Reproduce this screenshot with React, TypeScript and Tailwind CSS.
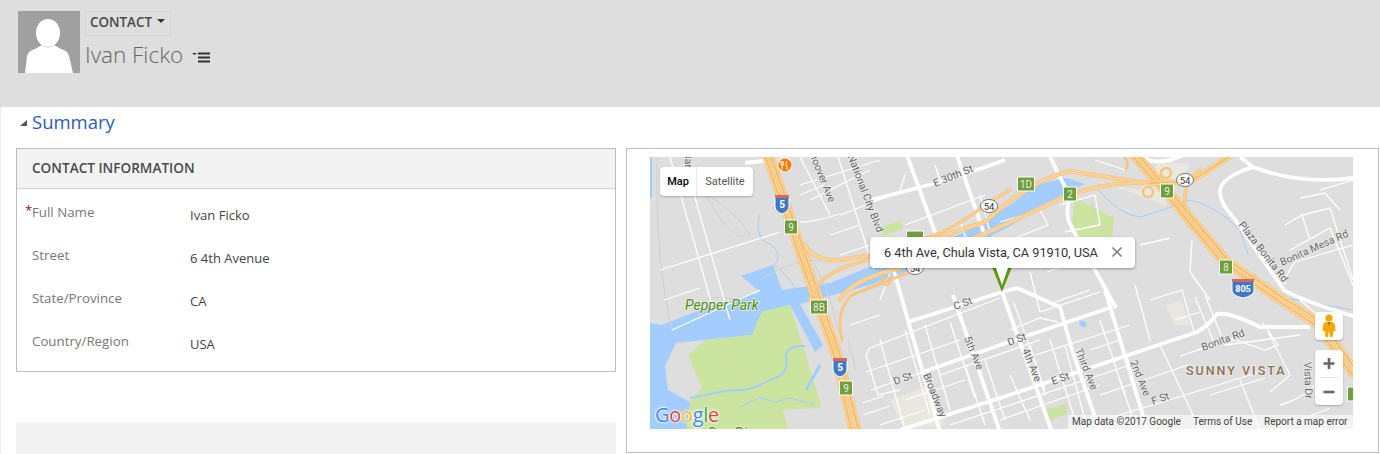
const mapFont = { fontFamily: "Roboto, sans-serif" };

const fields = [
  { label: "Full Name", value: "Ivan Ficko", required: true },
  { label: "Street", value: "6 4th Avenue" },
  { label: "State/Province", value: "CA" },
  { label: "Country/Region", value: "USA" },
];

// all map geometry is in page pixels, the svg viewBox starts at the map's corner
const bigRoads = [
  "M870 200 Q900 193 957 177 L1005 160",
  "M905 150 L936 235",
  "M955 150 L985 236",
  "M893 268 L940 432",
  "M953 295 L1000 432",
  "M1002 292 L1052 432",
  "M908 322 L1002 292 L1017 288 L1060 307 L1072 350 L1100 432",
  "M1105 290 L1148 432",
  "M920 373 L1000 345 L1112 307",
  "M900 430 L1000 398 L1197 332 Q1208 326 1217 314 Q1230 312 1260 327 L1310 327",
  "M1050 157 L1070 197 Q1064 215 1072 228 L1116 308",
  "M1240 157 L1253 167 Q1300 185 1353 178",
  "M1253 167 Q1218 178 1220 194 Q1222 206 1234 218 L1284 290 Q1300 300 1353 316",
  "M1135 150 Q1150 172 1190 152",
  "M745 163 L772 160",
];

const smallRoads = [
  "M670 157 L712 305", "M690 180 L730 320", "M660 270 L780 232", "M664 300 L700 288", "M672 330 L760 290",
  "M800 157 L830 215", "M838 157 L874 270", "M800 185 L880 160", "M800 195 L824 185", "M810 200 L870 170",
  "M840 215 L905 190", "M800 222 Q815 222 840 214", "M830 235 L860 225", "M840 255 L885 240",
  "M905 225 L985 195", "M960 220 L975 265", "M1000 222 L1040 210 L1048 225 L1010 240", "M880 300 L895 260",
  "M905 175 L900 190", "M935 165 L940 180", "M980 195 L990 232",
  "M1047 272 L1082 260", "M1030 272 L1040 312 L1100 292", "M1055 302 L1090 290",
  "M950 322 L975 398", "M1014 303 L1045 390", "M1100 320 L1125 395",
  "M866 355 L870 348 L1000 298", "M866 355 L878 395 L900 390", "M880 340 L905 430", "M850 325 L880 315",
  "M866 372 L960 340", "M871 390 L1000 345", "M862 403 L884 396", "M863 415 L890 406", "M880 425 L925 410", "M940 375 L1040 340",
  "M1010 330 L1040 318 L1058 322", "M1030 345 L1045 395", "M1050 340 L1075 420", "M1035 355 L1130 325",
  "M1090 350 L1120 340 L1130 365", "M1100 395 L1188 365", "M1110 418 L1260 372",
  "M1160 345 L1200 430", "M1150 300 L1182 290 L1195 335", "M1195 297 L1215 345", "M1175 320 L1200 312",
  "M1180 356 L1240 336", "M1197 350 L1235 340 Q1250 345 1265 350 L1278 345 L1262 322",
  "M1240 380 L1260 430", "M1210 395 L1265 378", "M1225 345 L1300 335", "M1268 332 L1290 375 L1270 392",
  "M1284 285 Q1288 270 1295 262 L1353 245", "M1290 250 L1330 228 L1353 285", "M1303 215 L1330 208 L1353 280",
  "M1285 225 L1302 215 L1310 240", "M1320 190 L1353 180", "M1300 198 L1325 193 L1340 210", "M1335 330 L1300 300",
  "M1280 405 Q1300 400 1315 385", "M1300 420 L1330 408",
  "M1205 295 L1225 345", "M1192 240 L1190 272 L1210 300", "M1135 285 L1150 340",
  "M1095 160 L1125 170", "M1140 245 L1170 238", "M1060 205 L1095 195 L1100 225 L1065 232",
  "M905 330 L930 415", "M925 325 L950 410", "M965 365 L985 425", "M985 360 L1005 420", "M1010 375 L1030 420",
  "M950 425 L1130 365", "M905 400 L965 380", "M1065 345 L1085 420", "M1120 380 L1135 425", "M1000 420 L1100 385",
];

const grayLines = [
  "M657 157 Q655 260 672 330", "M686 157 Q730 250 750 235 Q740 215 700 190", "M760 280 Q800 255 830 262", "M800 240 Q830 285 838 330",
  "M848 340 L856 370", "M700 320 Q690 290 740 300", "M1090 200 L1115 255",
];

function Shield({ x, y, text, w = 13 }: { x: number; y: number; text: string; w?: number }) {
  return (
    <g>
      <rect x={x - w / 2} y={y - 7} width={w} height={14} fill="#6f9e3f" stroke="#fff" strokeWidth="1" />
      <text x={x} y={y + 3.5} textAnchor="middle" fontSize="10" fill="#e9f2dd">{text}</text>
    </g>
  );
}

function Interstate({ x, y, text, w = 12 }: { x: number; y: number; text: string; w?: number }) {
  return (
    <g>
      <path d={`M${x - w / 2 - 1} ${y - 8} H${x + w / 2 + 1} V${y + 3} Q${x + w / 2} ${y + 8} ${x} ${y + 10} Q${x - w / 2} ${y + 8} ${x - w / 2 - 1} ${y + 3} Z`} fill="#3f79c3" stroke="#fff" strokeWidth="1" />
      <rect x={x - w / 2 - 1} y={y - 9} width={w + 2} height={3} fill="#d9655f" />
      <text x={x} y={y + 4} textAnchor="middle" fontSize={w > 14 ? 9 : 10} fontWeight="700" fill="#fff">{text}</text>
    </g>
  );
}

function RouteBadge({ x, y }: { x: number; y: number }) {
  return (
    <g>
      <ellipse cx={x} cy={y} rx={8.5} ry={6.5} fill="#fff" stroke="#555" strokeWidth="0.8" />
      <text x={x} y={y + 3.5} textAnchor="middle" fontSize="9.5" fill="#333">54</text>
    </g>
  );
}

function Freeway({ d, w = 5 }: { d: string; w?: number }) {
  return (
    <g fill="none" strokeLinecap="round" strokeLinejoin="round">
      <path d={d} stroke="#f6c47c" strokeWidth={w} />
      <path d={d} stroke="#fcdcae" strokeWidth={Math.max(w - 2, 0.6)} />
      <path d={d} stroke="#f6bb66" strokeWidth={Math.max(w - 4, 0.6)} />
    </g>
  );
}

function Label({ x, y, rot, text, size = 10.5, anchor = "start" }: { x: number; y: number; rot: number; text: string; size?: number; anchor?: "start" | "end" | "middle" }) {
  return (
    <text
      x={x}
      y={y}
      transform={`rotate(${rot} ${x} ${y})`}
      fontSize={size}
      textAnchor={anchor}
      fill="#666"
      stroke="#efefef"
      strokeWidth="1.5"
      paintOrder="stroke"
    >
      {text}
    </text>
  );
}

function MapDrawing() {
  return (
    <svg viewBox="650 157 703 272" className="block h-[272px] w-[703px]" style={mapFont}>
      <rect x="650" y="157" width="703" height="272" fill="#dedede" />

      {/* water */}
      <g fill="#a3ccff">
        <path d="M650 323 L662 325 L700 310 L760 292 L741 276 L773 265 L782 290 L830 283 L872 266 L905 256 L960 234 L1010 205 L1038 184 L1066 178 L1085 184 L1060 196 L1010 226 L960 252 L870 285 L800 304 L823 345 L815 352 L790 305 L762 312 L752 335 L705 340 L676 343 L665 366 L668 390 L690 402 L687 429 L650 429 Z" />
        <path d="M650 157 H652 V198 H650 Z" />
        <ellipse cx="1083" cy="324" rx="4" ry="3" transform="rotate(30 1083 324)" />
      </g>

      {/* park */}
      <g fill="#cbe5a1">
        <path d="M688 355 L705 340 L752 335 L762 312 L790 305 L822 408 L783 410 L788 429 L687 429 L690 402 L702 388 Z" />
        <path d="M1075 198 L1090 205 L1114 218 L1112 240 L1098 262 L1082 245 L1072 222 Z" />
        <path d="M1045 410 L1066 404 L1068 414 L1048 421 Z" />
        <path d="M880 228 L900 220 L903 228 L884 236 Z" />
      </g>
      <g fill="#e8e8de">
        <path d="M1110 185 L1165 205 L1190 165 L1160 160 L1140 190 Z" />
        <path d="M1166 305 L1182 300 L1190 325 L1175 325 Z" />
        <path d="M890 400 L930 385 L945 425 L905 430 Z" />
      </g>

      {/* park streams */}
      <g fill="none" stroke="#a3ccff">
        <path d="M690 398 L730 390 Q750 392 770 380 Q790 375 786 355 Q788 345 805 346" strokeWidth="2" />
        <path d="M740 407 L760 398 L775 402 L790 398 L815 405" strokeWidth="1" />
        <path d="M760 215 Q755 225 762 240 Q785 250 775 265 L790 280 L798 292" strokeWidth="1" />
        <path d="M1098 190 Q1120 215 1140 217 Q1165 210 1190 200 Q1215 205 1240 230 L1248 255" strokeWidth="1" />
        <path d="M1285 298 L1353 310" strokeWidth="1" />
        <path d="M820 365 L806 390" strokeWidth="3" />
      </g>

      <g fill="none" stroke="#d0d0d0" strokeWidth="1">
        {grayLines.map((d) => <path key={d} d={d} />)}
      </g>
      <g fill="none" stroke="#fff" strokeWidth="1.3">
        {smallRoads.map((d) => <path key={d} d={d} />)}
      </g>
      <g fill="none" stroke="#fff" strokeWidth="3.8" strokeLinejoin="round">
        {bigRoads.map((d) => <path key={d} d={d} />)}
      </g>

      {/* freeways */}
      <Freeway d="M763 150 L813 295 L833 352 L852 432" w={6} />
      <Freeway d="M769 150 L819 295 L839 352 L859 432" w={6} />
      <Freeway d="M805 245 Q815 262 840 260 L900 250 L985 222 Q1030 180 1070 171 L1143 183" w={4.5} />
      <Freeway d="M810 300 Q815 275 860 262 L935 235 Q960 225 985 205 L1010 190" w={3.5} />
      <Freeway d="M840 300 Q850 280 900 268 L993 230 L1067 196 Q1100 183 1150 182" w={4.5} />
      <Freeway d="M842 340 Q835 310 852 295 L920 268" w={3} />
      <Freeway d="M1127 150 L1173 203 L1220 260 L1277 300 L1315 325 L1353 376" w={6} />
      <Freeway d="M1134 150 L1180 203 L1228 260 L1283 298 L1322 322 L1353 366" w={6} />
      <Freeway d="M1232 155 L1190 182 L1150 183" w={6} />
      <Freeway d="M1185 205 Q1183 180 1200 170" w={3.5} />
      <g fill="none" stroke="#f6c47c" strokeWidth="2.5">
        <circle cx="1166" cy="173" r="5" />
        <circle cx="1148" cy="192" r="5" />
        <path d="M1126 170 Q1130 162 1124 157" />
      </g>
      <circle cx="886" cy="281" r="4" fill="none" stroke="#f6c47c" strokeWidth="2" />

      {/* labels */}
      <Label x={685} y={168} rot={88} anchor="end" text="Mar" />
      <Label x={829} y={203} rot={68} anchor="end" text="Hoover Ave" />
      <Label x={877} y={233} rot={69} anchor="end" text="National City Blvd" />
      <Label x={935} y={187} rot={-22} text="E 30th St" />
      <Label x={955} y={310} rot={-20} text="C St" />
      <Label x={1009} y={346} rot={-20} text="D St" />
      <Label x={895} y={385} rot={-20} text="D St" />
      <Label x={1053} y={385} rot={-20} text="E St" />
      <Label x={1153} y={405} rot={-20} text="F St" />
      <Label x={964} y={338} rot={68} text="5th Ave" />
      <Label x={923} y={375} rot={68} text="Broadway" />
      <Label x={1022} y={350} rot={68} text="4th Ave" />
      <Label x={1075} y={350} rot={68} text="Third Ave" />
      <Label x={1130} y={362} rot={68} text="2nd Ave" />
      <Label x={1203} y={351} rot={-20} text="Bonita Rd" />
      <Label x={1304} y={362} rot={88} text="Vista Dr" />
      <Label x={1238} y={225} rot={52} text="Plaza Bonita Rd" />
      <Label x={1282} y={266} rot={-24} text="Bonita Mesa Rd" />
      <text x="1186" y="375" fontSize="12.5" fontWeight="500" letterSpacing="2" fill="#8d6e4f" stroke="#eee" strokeWidth="1.5" paintOrder="stroke">SUNNY VISTA</text>
      <text x="685" y="310" fontSize="14" fontStyle="italic" fill="#4f8a1f" stroke="#eef5e2" strokeWidth="1.5" paintOrder="stroke">Pepper Park</text>
      <text x="708" y="438" fontSize="14" fill="#4f8a1f" stroke="#eef5e2" strokeWidth="1.5" paintOrder="stroke">San Diego</text>

      {/* shields */}
      <Interstate x={782} y={204} text="5" />
      <Shield x={791} y={227} text="9" />
      <Shield x={819} y={307} text="8B" w={17} />
      <Interstate x={840} y={367} text="5" />
      <Shield x={846} y={388} text="9" />
      <Shield x={1026} y={184} text="1D" w={17} />
      <Shield x={1070} y={194} text="2" />
      <Shield x={1167} y={191} text="9" />
      <Shield x={1226} y={267} text="8" />
      <Interstate x={1243} y={288} text="805" w={20} />
      <Shield x={1354} y={394} text="" />
      <Shield x={915} y={238} text="" w={17} />
      <RouteBadge x={989} y={206} />
      <RouteBadge x={1185} y={180} />
      <RouteBadge x={915} y={268} />

      <circle cx="785" cy="165" r="7.5" fill="#fff" opacity="0.7" />
      <circle cx="785" cy="165" r="6.5" fill="#f57c00" />
      <path d="M782 161 V165 M780.8 161 V164 Q781 165.5 783.2 165.5 V161 M782 165 V170 M787 161 Q785.5 163 786 166 L787 166 V170" fill="none" stroke="#fff" strokeWidth="0.9" />

      {/* marker under the info window tail */}
      <path d="M990 262 L1014 262 L1002 292 Z" fill="#5f9a12" />
    </svg>
  );
}

function MapOverlays() {
  return (
    <>
      <div className="absolute left-[10px] top-[10px] flex h-[29px] w-[93px] rounded-sm bg-white text-[11px] leading-[29px] shadow-[0_1px_2px_rgba(0,0,0,0.25)] [font-family:Roboto,sans-serif]">
        <div className="w-[37px] border-r border-[#e6e6e6] text-center font-medium text-black">Map</div>
        <div className="flex-1 text-center text-[#565656]">Satellite</div>
      </div>

      <div className="absolute left-[220px] top-[80px] flex h-[31px] w-[265px] items-center rounded-sm bg-white pl-[14px] text-[12.75px] text-[#333] shadow-[0_1px_3px_rgba(0,0,0,0.35)] [font-family:Roboto,sans-serif]">
        <span className="whitespace-nowrap">6 4th Ave, Chula Vista, CA 91910, USA</span>
        <svg width="10" height="10" viewBox="0 0 10 10" className="absolute right-[13px] top-[10px]">
          <path d="M0.5 0.5 L9.5 9.5 M9.5 0.5 L0.5 9.5" stroke="#8a8a8a" strokeWidth="1.7" />
        </svg>
      </div>
      <svg width="20" height="20" viewBox="0 0 20 20" className="absolute left-[342px] top-[111px]">
        <path d="M4 0 L16 0 L10 17 Z" fill="#fff" />
      </svg>

      <div className="absolute left-[665px] top-[155px] flex h-[28px] w-[28px] items-center justify-center rounded-sm bg-white shadow-[0_1px_2px_rgba(0,0,0,0.25)]">
        <svg width="14" height="24" viewBox="0 0 14 24">
          <circle cx="7" cy="4" r="3.6" fill="#f5a800" />
          <path d="M4 8 H10 Q12.5 8.5 13 11 L13.5 17 H11.5 L10.5 23 H8 L7 16 L6 23 H3.5 L2.5 17 H0.5 L1 11 Q1.5 8.5 4 8 Z" fill="#f5a800" />
          <path d="M5.5 8 L7 12 L8.5 8 Z" fill="#d9601a" />
        </svg>
      </div>

      <div className="absolute left-[665px] top-[193px] flex h-[55px] w-[28px] flex-col items-center rounded-sm bg-white shadow-[0_1px_2px_rgba(0,0,0,0.25)]">
        <svg width="28" height="27" viewBox="0 0 28 27">
          <path d="M14 8 V19 M8.5 13.5 H19.5" stroke="#666" strokeWidth="2.6" />
        </svg>
        <div className="h-px w-[19px] bg-[#e6e6e6]" />
        <svg width="28" height="27" viewBox="0 0 28 27">
          <path d="M8.5 14 H19.5" stroke="#666" strokeWidth="2.6" />
        </svg>
      </div>

      <div className="absolute left-[5px] top-[245px] text-[20px] font-medium leading-[26px] tracking-[-0.3px] [font-family:'Open_Sans',sans-serif] [text-shadow:0_0_2px_#fff,0_0_2px_#fff,0_0_3px_#fff]">
        <span className="text-[#4285f4]">G</span>
        <span className="text-[#ea4335]">o</span>
        <span className="text-[#fbbc05]">o</span>
        <span className="text-[#4285f4]">g</span>
        <span className="text-[#34a853]">l</span>
        <span className="text-[#ea4335]">e</span>
      </div>

      <div className="absolute right-0 top-[258px] flex h-[14px] w-[285px] bg-white/60 text-[10px] leading-[14px] whitespace-nowrap text-[#444] [font-family:Roboto,sans-serif]">
        <span className="ml-[4px] w-[121px]">Map data ©2017 Google</span>
        <span className="w-[71px]">Terms of Use</span>
        <span>Report a map error</span>
      </div>
    </>
  );
}

export default function App() {
  return (
    <div className="h-[454px] w-[1380px] overflow-hidden bg-white [font-family:'Open_Sans',sans-serif]">
      <header className="flex h-[107px] items-start bg-[#dedede] pl-[18px] pt-[11px]">
        <div className="h-[62px] w-[62px] bg-[#a0a0a0]">
          <svg viewBox="0 0 62 62" className="h-[62px] w-[62px]">
            <ellipse cx="30" cy="22" rx="12" ry="14" fill="#fff" />
            <path d="M7 62 L9 45 Q10 40 17 38 L24 34 Q30 39 36 34 L43 38 Q50 40 51 45 L55 62 Z" fill="#fff" />
          </svg>
        </div>
        <div className="ml-[5px]">
          <div className="flex h-[25px] w-[86px] items-center border border-[#d6d6d6] pb-[2px] pl-[4px] text-[13.4px] font-semibold text-[#4a4a4a]">
            CONTACT
            <span className="ml-[5px] mb-[3px] border-x-[4px] border-t-[4px] border-x-transparent border-t-[#333]" />
          </div>
          <div className="mt-[3px] flex items-center">
            <span className="text-[22.5px] font-light leading-[32px] text-[#666]">Ivan Ficko</span>
            <svg width="18" height="12" viewBox="0 0 18 12" className="ml-[9px] mt-[5px]">
              <path d="M0 1 H5 L2.5 3 Z" fill="#333" />
              <path d="M6 1.5 H18 M6 5.5 H18 M6 9.5 H18" stroke="#333" strokeWidth="2" />
            </svg>
          </div>
        </div>
      </header>

      <main className="border-l border-[#eeeeee]">
        <div className="flex h-[41px] items-center pb-[11px] pl-[19px]">
          <span className="mt-[1px] border-b-[6px] border-l-[7px] border-b-[#555] border-l-transparent" />
          <span className="ml-[5px] text-[18.5px] leading-[26px] text-[#2b5bb5]">Summary</span>
        </div>

        <div className="flex items-start pl-[15px]">
          <div className="w-[600px]">
            <section className="h-[224px] border border-[#bdbdbd]">
              <div className="flex h-[40px] items-center border-b border-[#cfcfcf] bg-[#f3f3f3] pb-[1px] pl-[15px] text-[13.6px] font-semibold text-[#4a4a4a]">
                CONTACT INFORMATION
              </div>
              <div className="pt-[14px]">
                {fields.map((f) => (
                  <div key={f.label} className="relative flex h-[43px] text-[13px] leading-[18px]">
                    {f.required && <span className="absolute left-[8px] top-[-2px] text-[#8b1a1a]">*</span>}
                    <div className="w-[173px] pl-[15px] text-[13.3px] text-[#777]">{f.label}</div>
                    <div className="pt-[3px] text-[#444]">{f.value}</div>
                  </div>
                ))}
              </div>
            </section>
            <div className="mt-[50px] h-[40px] bg-[#f3f3f3]" />
          </div>

          <section className="ml-[10px] h-[305px] w-[753px] border border-[#bdbdbd] pl-[23px] pt-[8px]">
            <div className="relative h-[272px] w-[703px] overflow-hidden">
              <MapDrawing />
              <MapOverlays />
            </div>
          </section>
        </div>
      </main>
    </div>
  );
}
